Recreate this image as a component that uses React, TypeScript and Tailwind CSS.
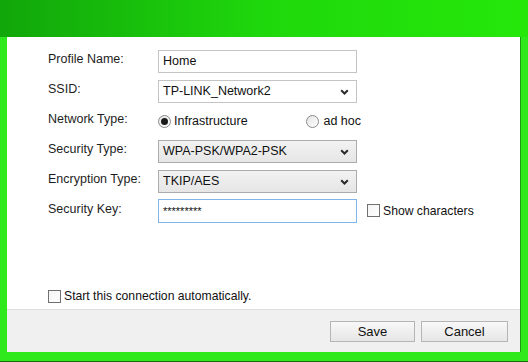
import React from "react";

const font = { fontFamily: '"Liberation Sans", Arial, sans-serif' };

function Chevron() {
  return (
    <svg width="9" height="6" viewBox="0 0 9 6" className="absolute right-[7px] top-1/2 -translate-y-1/2">
      <path d="M1.2 1.2 L4.5 4.5 L7.8 1.2" fill="none" stroke="#2a2a2a" strokeWidth="2" />
    </svg>
  );
}

function Select({ value }: { value: string }) {
  return (
    <div className="relative w-[199px] h-[23px] border border-[#acacac] bg-gradient-to-b from-[#f2f2f2] to-[#e6e6e6] flex items-center pl-[4px] text-[12.5px] text-[#111]">
      {value}
      <Chevron />
    </div>
  );
}

function Label({ children }: { children: React.ReactNode }) {
  return <div className="w-[110px] text-[12.5px] text-[#1e1e1e] -mt-[4px]">{children}</div>;
}

function Row({ label, children, className = "" }: { label: string; children: React.ReactNode; className?: string }) {
  return (
    <div className={"flex items-center " + className}>
      <Label>{label}</Label>
      {children}
    </div>
  );
}

function Checkbox() {
  return <div className="w-[13px] h-[13px] border border-[#707070] bg-gradient-to-br from-[#f4f4f4] to-white" />;
}

function Radio({ checked }: { checked?: boolean }) {
  return (
    <div className="w-[13px] h-[13px] rounded-full border border-[#8a8a8a] bg-gradient-to-br from-[#e4e4e4] to-white flex items-center justify-center">
      {checked && <div className="w-[7px] h-[7px] rounded-full bg-[#1a1a1a]" />}
    </div>
  );
}

export default function App() {
  return (
    <div className="w-[528px] h-[362px] flex flex-col bg-[#2fe91c] overflow-hidden" style={font}>
      <div className="h-[37px] bg-gradient-to-r from-[#11a60a] via-[#1fd80c] to-[#25e80a]" />
      <div className="flex-1 flex pl-[7px] pr-[6px] pb-[9px] border-b border-[#1a6a10]">
        <div className="w-[514px] flex flex-col bg-white border-r border-[#1c9a12]">
          <div className="flex-1 flex flex-col pl-[41px] pt-[13px]">
            <Row label="Profile Name:">
              <div className="w-[199px] h-[23px] border border-[#c4c4c4] bg-white flex items-center pl-[4px] text-[12.5px] text-[#111]">
                Home
              </div>
            </Row>
            <Row label="SSID:" className="mt-[7px]">
              <div className="relative w-[199px] h-[23px] border border-[#c4c4c4] bg-white flex items-center pl-[4px] text-[12.5px] text-[#111]">
                TP-LINK_Network2
                <Chevron />
              </div>
            </Row>
            <Row label="Network Type:" className="mt-[7px] h-[23px]">
              <div className="w-[203px] flex items-center text-[12.5px] text-[#111]">
                <Radio checked />
                <span className="ml-[3px]">Infrastructure</span>
                <div className="ml-auto flex items-center">
                  <Radio />
                  <span className="ml-[4px]">ad hoc</span>
                </div>
              </div>
            </Row>
            <Row label="Security Type:" className="mt-[7px]">
              <Select value="WPA-PSK/WPA2-PSK" />
            </Row>
            <Row label="Encryption Type:" className="mt-[7px]">
              <Select value="TKIP/AES" />
            </Row>
            <Row label="Security Key:" className="mt-[6px]">
              <div className="w-[199px] h-[24px] border border-[#7eb4ea] bg-white flex items-center pl-[4px] text-[11px] text-[#111]">
                *********
              </div>
              <div className="ml-[10px] flex items-center text-[12.2px] text-[#111]">
                <Checkbox />
                <span className="ml-[3px]">Show characters</span>
              </div>
            </Row>
            <div className="mt-[64px] flex items-center text-[12.2px] text-[#111]">
              <Checkbox />
              <span className="ml-[3px]">Start this connection automatically.</span>
            </div>
          </div>
          <div className="h-[43px] border-t border-[#dedede] bg-[#f0f0f0] flex justify-end items-start pt-[11px] pr-[12px] gap-[6px]">
            <button className="w-[85px] h-[21px] border border-[#b5b5b5] bg-gradient-to-b from-[#f8f8f8] to-[#e6e6e6] text-[13px] text-[#111] flex items-center justify-center">
              Save
            </button>
            <button className="w-[87px] h-[21px] border border-[#b5b5b5] bg-gradient-to-b from-[#f8f8f8] to-[#e6e6e6] text-[13px] text-[#111] flex items-center justify-center">
              Cancel
            </button>
          </div>
        </div>
      </div>
    </div>
  );
}
